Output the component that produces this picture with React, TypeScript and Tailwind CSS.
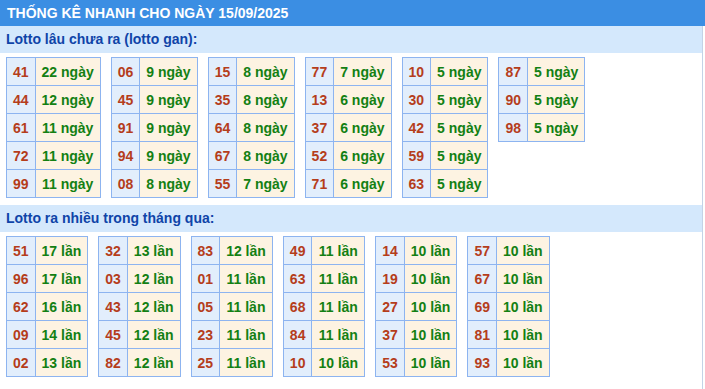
import React from "react";

type Cell = [string, string];

const gan: Cell[][] = [
  [["41", "22 ngày"], ["44", "12 ngày"], ["61", "11 ngày"], ["72", "11 ngày"], ["99", "11 ngày"]],
  [["06", "9 ngày"], ["45", "9 ngày"], ["91", "9 ngày"], ["94", "9 ngày"], ["08", "8 ngày"]],
  [["15", "8 ngày"], ["35", "8 ngày"], ["64", "8 ngày"], ["67", "8 ngày"], ["55", "7 ngày"]],
  [["77", "7 ngày"], ["13", "6 ngày"], ["37", "6 ngày"], ["52", "6 ngày"], ["71", "6 ngày"]],
  [["10", "5 ngày"], ["30", "5 ngày"], ["42", "5 ngày"], ["59", "5 ngày"], ["63", "5 ngày"]],
  [["87", "5 ngày"], ["90", "5 ngày"], ["98", "5 ngày"]],
];

const nhieu: Cell[][] = [
  [["51", "17 lần"], ["96", "17 lần"], ["62", "16 lần"], ["09", "14 lần"], ["02", "13 lần"]],
  [["32", "13 lần"], ["03", "12 lần"], ["43", "12 lần"], ["45", "12 lần"], ["82", "12 lần"]],
  [["83", "12 lần"], ["01", "11 lần"], ["05", "11 lần"], ["23", "11 lần"], ["25", "11 lần"]],
  [["49", "11 lần"], ["63", "11 lần"], ["68", "11 lần"], ["84", "11 lần"], ["10", "10 lần"]],
  [["14", "10 lần"], ["19", "10 lần"], ["27", "10 lần"], ["37", "10 lần"], ["53", "10 lần"]],
  [["57", "10 lần"], ["67", "10 lần"], ["69", "10 lần"], ["81", "10 lần"], ["93", "10 lần"]],
];

function Tbl({ rows }: { rows: Cell[] }) {
  return (
    <table className="border-collapse">
      <tbody>
        {rows.map(([n, v], i) => (
          <tr key={i}>
            <td className="border border-[#8db4f0] bg-[#e2eefc] h-[28px] px-[6px] text-center text-[#b53d1b] font-bold text-[14px] leading-none">
              {n}
            </td>
            <td className="border border-[#8db4f0] bg-[#fdf3e2] h-[28px] px-[6px] text-center text-[#138013] font-bold text-[14px] leading-none">
              {v}
            </td>
          </tr>
        ))}
      </tbody>
    </table>
  );
}

function Section({ title, tables }: { title: string; tables: Cell[][] }) {
  return (
    <div>
      <div className="bg-[#d4e8fc] h-[27px] flex items-center px-[6px] text-[#0f44a8] font-bold text-[14px]">
        {title}
      </div>
      <div className="flex items-start gap-x-[10px] pl-[6px] pt-[4px]">
        {tables.map((t, i) => (
          <Tbl key={i} rows={t} />
        ))}
      </div>
    </div>
  );
}

export default function App() {
  return (
    <div className="w-[705px] h-[389px] bg-white overflow-hidden" style={{ fontFamily: '"Liberation Sans", Arial, sans-serif' }}>
      <div className="bg-[#3b8ee3] h-[26px] flex items-center px-[7px] text-white font-bold text-[14px]">
        THỐNG KÊ NHANH CHO NGÀY 15/09/2025
      </div>
      <div className="w-[703px] border-r border-[#c4d3e6] h-[363px]">
        <Section title="Lotto lâu chưa ra (lotto gan):" tables={gan} />
        <div className="h-[7px]" />
        <Section title="Lotto ra nhiều trong tháng qua:" tables={nhieu} />
      </div>
    </div>
  );
}
